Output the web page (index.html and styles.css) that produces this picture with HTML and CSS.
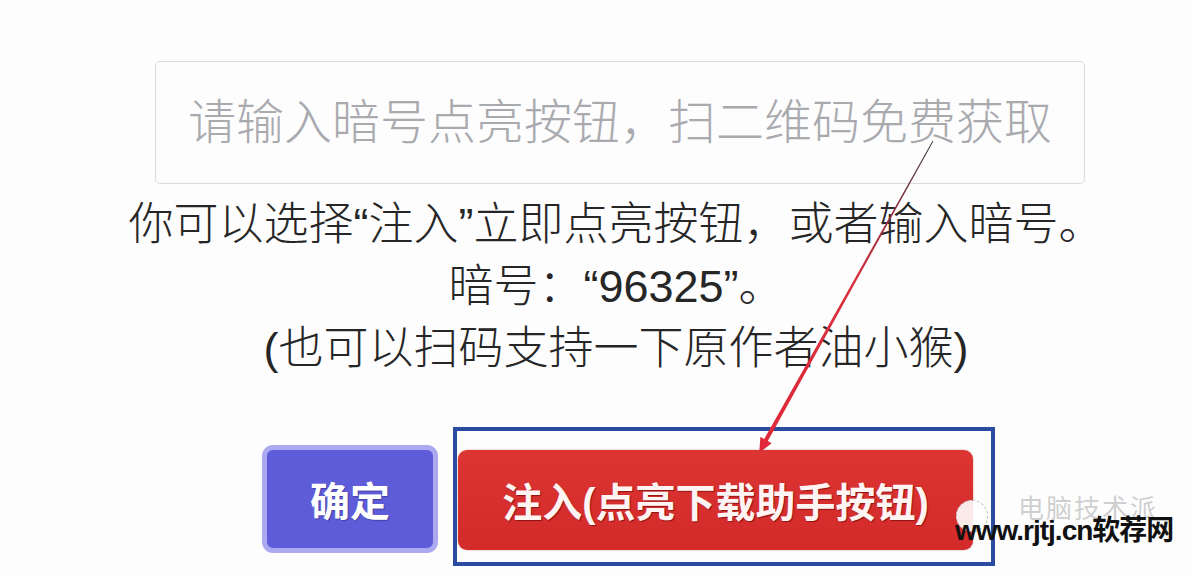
FILE: index.html
```html
<!DOCTYPE html>
<html lang="zh-CN">
<head>
  <meta charset="UTF-8">
  <title>注入暗号</title>
  <link rel="stylesheet" href="styles.css">
</head>
<body>
  <div class="page">
    <input class="code-input" type="text" placeholder="请输入暗号点亮按钮，扫二维码免费获取">

    <p class="tip">
      你可以选择“注入”立即点亮按钮，或者输入暗号。<br>
      暗号：“96325”。<br>
      (也可以扫码支持一下原作者油小猴)
    </p>

    <div class="actions">
      <button class="btn-ok">确定</button>
      <div class="inject-frame">
        <button class="btn-inject">注入(点亮下载助手按钮)</button>
      </div>
    </div>

    <!-- 标注箭头 -->
    <svg class="arrow" width="1192" height="576" viewBox="0 0 1192 576">
      <defs>
        <linearGradient id="arrowGrad" gradientUnits="userSpaceOnUse" x1="933" y1="141" x2="760" y2="452">
          <stop offset="0" stop-color="#3a3a3a"/>
          <stop offset="0.22" stop-color="#8a3040"/>
          <stop offset="0.45" stop-color="#d8303c"/>
          <stop offset="1" stop-color="#e0283a"/>
        </linearGradient>
      </defs>
      <polygon fill="url(#arrowGrad)" points="933.4,141.2 767.8,441 771.6,443.2 759.2,453 760.4,436.8 764.2,439 932.6,140.8"/>
    </svg>

    <div class="watermark">
      <span class="wm-icon"></span>
      <span class="wm-faint">电脑技术派</span>
      <span class="wm-text">www.rjtj.cn软荐网</span>
    </div>
  </div>
</body>
</html>
```

FILE: styles.css
```css
body { margin: 0; padding: 0; background-color: #fdfdfe; font-family: "Liberation Sans", "Noto Sans CJK SC", sans-serif; }

.page { position: relative; width: 1192px; height: 576px; overflow: hidden; padding-top: 61px; box-sizing: border-box; }

.code-input {
  display: block;
  margin: 0 0 0 155px;
  width: 930px;
  height: 123px;
  box-sizing: border-box;
  border: 1px solid #d8dbdf;
  border-radius: 5px;
  background-color: #fdfdfe;
  font-family: "Liberation Sans", "Noto Sans CJK SC", sans-serif;
  font-size: 48px;
  font-weight: 300;
  text-align: center;
  color: #333;
  outline: none;
}
.code-input::placeholder { color: #a9aaae; }

.tip {
  margin: 10px 0 0 0;
  padding-left: 40px;
  font-size: 45px;
  font-weight: 300;
  line-height: 62px;
  text-align: center;
  color: #262626;
}

.actions {
  display: flex;
  align-items: flex-start;
  gap: 15px;
  margin-top: 47px;
  padding-left: 262px;
}

.btn-ok {
  margin-top: 18px;
  width: 176px;
  height: 108px;
  border: 5px solid #aba9f0;
  border-radius: 11px;
  background-color: #5f5cd9;
  color: #fff;
  font-family: "Liberation Sans", "Noto Sans CJK SC", sans-serif;
  font-size: 40px;
  font-weight: bold;
  text-shadow: 1px 1px 1px rgba(30, 20, 90, 0.4);
}

.inject-frame {
  width: 542px;
  height: 139px;
  box-sizing: border-box;
  border: 4px solid #2b4ba0;
  padding: 19px 0 0 1px;
}

.btn-inject {
  display: block;
  width: 515px;
  height: 100px;
  border: none;
  border-radius: 9px;
  background: linear-gradient(#dc3532, #d32a2a);
  box-shadow: 0 0 2px rgba(120, 0, 0, 0.4);
  color: #fff4f4;
  font-family: "Liberation Sans", "Noto Sans CJK SC", sans-serif;
  font-size: 40px;
  font-weight: bold;
  text-shadow: 1px 1px 1px rgba(90, 0, 0, 0.6);
}

.arrow { position: absolute; left: 0; top: 0; pointer-events: none; }

.watermark { position: absolute; left: 950px; top: 486px; width: 240px; height: 62px; }
.wm-icon {
  position: absolute;
  left: 6px;
  top: 14px;
  width: 30px;
  height: 30px;
  border-radius: 50%;
  background-color: rgba(255, 255, 255, 0.9);
  border: 1px dashed #bbb;
}
.wm-faint {
  position: absolute;
  left: 68px;
  top: 2px;
  font-size: 26px;
  color: rgba(150, 150, 150, 0.45);
  letter-spacing: 2px;
}
.wm-text {
  position: absolute;
  left: 5px;
  top: 22px;
  font-size: 28px;
  font-weight: bold;
  letter-spacing: -1px;
  color: #111;
  white-space: nowrap;
}
```
